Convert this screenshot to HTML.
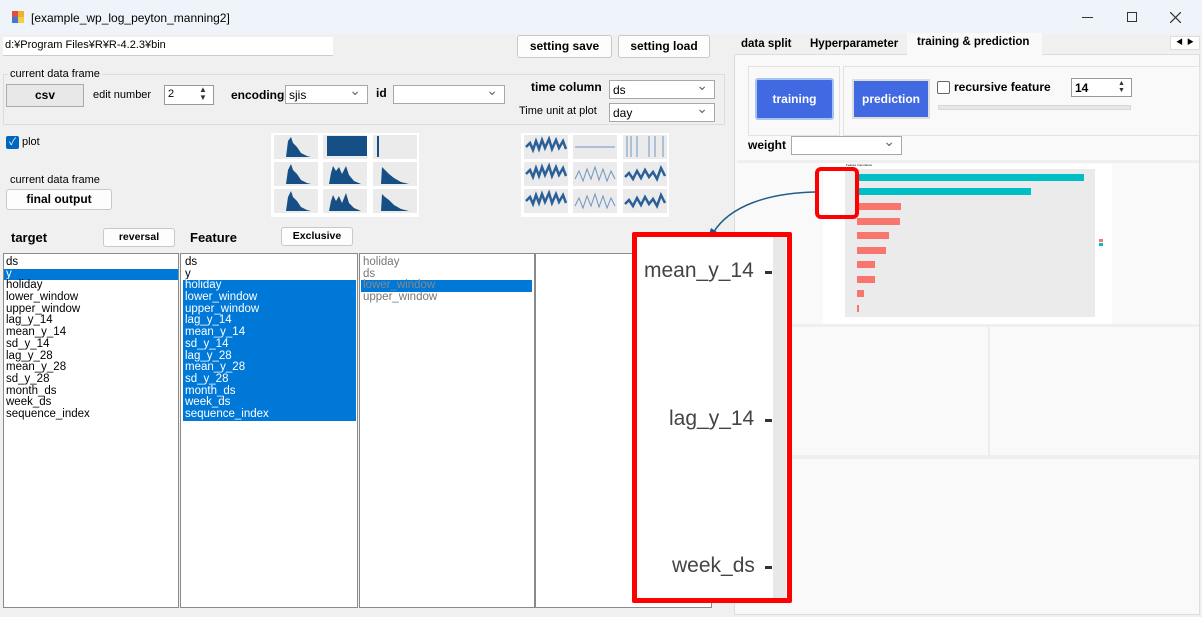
<!DOCTYPE html>
<html><head><meta charset="utf-8"><style>
*{box-sizing:border-box;margin:0;padding:0}
body{width:1202px;height:617px;overflow:hidden;background:#f0f0f0;font-family:"Liberation Sans","Noto Sans CJK JP",sans-serif;font-size:12px;color:#000;position:relative}
.a{position:absolute;white-space:nowrap}
.btn{position:absolute;background:#fdfdfd;border:1px solid #c8c8c8;border-radius:3px;font-weight:bold;text-align:center;font-size:12px;white-space:nowrap}
.cb{position:absolute;background:#fff;border:1px solid #a8a8a8;font-size:12px;padding:2px 3px}
.cb:after{content:"⌄";position:absolute;right:6px;top:-4px;color:#666;font-size:14px}
.list{position:absolute;background:#fff;border:1px solid #8a8a8a;font-size:11.5px;line-height:11.7px;padding-top:1px}
.list div{padding-left:2px;height:11.7px;white-space:nowrap}
.sel{background:#0078d7;color:#fff}
</style></head><body>
<div class="a" style="left:0;top:0;width:1202px;height:34px;background:#eef4f9"></div>
<div class="a" style="left:12px;top:11px;width:6px;height:6px;background:#e0503c"></div>
<div class="a" style="left:18px;top:11px;width:6px;height:6px;background:#f0b030"></div>
<div class="a" style="left:12px;top:17px;width:6px;height:6px;background:#3c78d8"></div>
<div class="a" style="left:18px;top:17px;width:6px;height:6px;background:#f0d040"></div>
<div class="a" style="left:31px;top:11px;font-size:12px">[example_wp_log_peyton_manning2]</div>
<div class="a" style="left:1082px;top:17px;width:11px;height:1px;background:#333"></div>
<div class="a" style="left:1127px;top:12px;width:10px;height:10px;border:1px solid #333"></div>
<svg class="a" style="left:1170px;top:12px" width="11" height="11"><path d="M0 0L11 11M11 0L0 11" stroke="#333" stroke-width="1.2"/></svg>

<div class="a" style="left:3px;top:37px;width:330px;height:19px;background:#fff;border-bottom:1px solid #ccc;padding:2px 2px;font-size:11px">d:¥Program Files¥R¥R-4.2.3¥bin</div>
<div class="btn" style="left:517px;top:35px;width:95px;height:23px;line-height:21px">setting save</div>
<div class="btn" style="left:618px;top:35px;width:92px;height:23px;line-height:21px">setting load</div>

<div class="a" style="left:3px;top:74px;width:722px;height:51px;border:1px solid #dcdcdc"></div>
<div class="a" style="left:8px;top:68px;background:#f0f0f0;padding:0 2px;font-size:11px">current data frame</div>
<div class="btn" style="left:6px;top:84px;width:78px;height:23px;line-height:21px;background:#e8e8e8;border-color:#aaa;border-radius:0">csv</div>
<div class="a" style="left:93px;top:89px;font-size:11px">edit number</div>
<div class="a" style="left:164px;top:85px;width:50px;height:20px;background:#fff;border:1px solid #999;padding:2px 3px;font-size:11px">2</div>
<div class="a" style="left:199px;top:86px;font-size:8px;line-height:8px;color:#333">▲<br>▼</div>
<div class="a" style="left:231px;top:88px;font-weight:bold">encoding</div>
<div class="cb" style="left:285px;top:85px;width:83px;height:19px">sjis</div>
<div class="a" style="left:376px;top:86px;font-weight:bold">id</div>
<div class="cb" style="left:393px;top:85px;width:112px;height:19px"></div>
<div class="a" style="left:531px;top:80px;font-weight:bold">time column</div>
<div class="cb" style="left:609px;top:80px;width:106px;height:19px">ds</div>
<div class="a" style="left:519px;top:105px;font-size:11px">Time unit at plot</div>
<div class="cb" style="left:609px;top:103px;width:106px;height:19px">day</div>

<div class="a" style="left:6px;top:136px;width:13px;height:13px;background:#0067c0;border-radius:2px;color:#fff;font-size:10px;line-height:13px;text-align:center">✓</div>
<div class="a" style="left:22px;top:136px;font-size:11px">plot</div>
<div class="a" style="left:10px;top:174px;font-size:11px">current data frame</div>
<div class="btn" style="left:6px;top:189px;width:106px;height:21px;line-height:19px">final output</div>

<svg class="a" style="left:271px;top:133px" width="148" height="84">
<rect width="148" height="84" fill="#fff"/>
<g fill="#ebebeb"><rect x="3" y="2" width="44" height="24"/><rect x="52" y="2" width="44" height="24"/><rect x="102" y="2" width="44" height="24"/>
<rect x="3" y="29" width="44" height="24"/><rect x="52" y="29" width="44" height="24"/><rect x="102" y="29" width="44" height="24"/>
<rect x="3" y="56" width="44" height="24"/><rect x="52" y="56" width="44" height="24"/><rect x="102" y="56" width="44" height="24"/></g>
<g fill="#164f86">
<path d="M15 24 L17 8 L20 4 L22 10 L26 14 L30 20 L36 23 L40 24Z"/>
<rect x="56" y="3" width="40" height="20"/>
<rect x="106" y="3" width="2" height="21"/>
<path d="M15 51 L17 37 L20 31 L22 37 L26 41 L30 47 L36 50 L40 51Z"/>
<path d="M58 51 L60 40 L62 33 L65 38 L68 34 L71 41 L75 33 L78 42 L83 48 L90 51Z"/>
<path d="M110 51 L111 34 L114 37 L118 41 L123 45 L130 49 L138 51Z"/>
<path d="M15 78 L17 64 L20 58 L22 64 L26 68 L30 74 L36 77 L40 78Z"/>
<path d="M58 78 L60 68 L62 62 L65 68 L68 63 L71 70 L75 60 L78 70 L83 75 L90 78Z"/>
<path d="M110 78 L111 61 L114 64 L118 67 L123 72 L130 76 L138 78Z"/>
</g></svg>
<svg class="a" style="left:521px;top:133px" width="148" height="84">
<rect width="148" height="84" fill="#fff"/>
<g fill="#ebebeb"><rect x="3" y="2" width="44" height="24"/><rect x="52" y="2" width="44" height="24"/><rect x="102" y="2" width="44" height="24"/>
<rect x="3" y="29" width="44" height="24"/><rect x="52" y="29" width="44" height="24"/><rect x="102" y="29" width="44" height="24"/>
<rect x="3" y="56" width="44" height="24"/><rect x="52" y="56" width="44" height="24"/><rect x="102" y="56" width="44" height="24"/></g>
<g fill="none" stroke="#2a5f98" stroke-width="2.5">
<path d="M5 14 L9 10 L12 17 L15 8 L18 16 L21 7 L24 15 L28 6 L31 16 L35 7 L38 15 L42 8 L45 16"/>
<path d="M5 41 L9 37 L12 44 L15 35 L18 43 L21 34 L24 42 L28 33 L31 43 L35 34 L38 42 L42 35 L45 43"/>
<path d="M5 68 L9 64 L12 71 L15 62 L18 70 L21 61 L24 69 L28 60 L31 70 L35 61 L38 69 L42 62 L45 70"/>
<path d="M104 44 L108 40 L112 46 L116 38 L120 45 L124 37 L128 44 L132 39 L136 46 L140 35 L144 43"/>
<path d="M104 71 L108 67 L112 73 L116 65 L120 72 L124 64 L128 71 L132 66 L136 73 L140 62 L144 70"/>
</g>
<g fill="none" stroke="#6f95bf" stroke-width="1">
<path d="M54 14 L94 14"/>
<path d="M54 46 L58 38 L62 48 L66 36 L70 46 L74 34 L78 47 L82 36 L86 48 L90 38 L94 46"/>
<path d="M54 73 L58 65 L62 75 L66 63 L70 73 L74 61 L78 74 L82 63 L86 75 L90 65 L94 73"/>
<path d="M106 3V24M110 3V24M116 3V24M128 3V24M134 3V24M142 3V24"/>
</g></svg>

<div class="a" style="left:11px;top:230px;font-weight:bold;font-size:13px">target</div>
<div class="btn" style="left:103px;top:228px;width:72px;height:19px;line-height:17px;font-size:10.5px">reversal</div>
<div class="a" style="left:190px;top:230px;font-weight:bold;font-size:13px">Feature</div>
<div class="btn" style="left:281px;top:227px;width:72px;height:19px;line-height:16px;font-size:10.5px">Exclusive</div>

<div class="list" style="left:3px;top:253px;width:176px;height:355px;padding-top:3px">
<div>ds</div><div class="sel">y</div><div>holiday</div><div>lower_window</div><div>upper_window</div><div>lag_y_14</div><div>mean_y_14</div><div>sd_y_14</div><div>lag_y_28</div><div>mean_y_28</div><div>sd_y_28</div><div>month_ds</div><div>week_ds</div><div>sequence_index</div></div>
<div class="list" style="left:180px;top:253px;width:178px;height:355px;padding-left:2px;padding-top:3px">
<div>ds</div><div>y</div><div class="sel" style="width:173px">holiday</div><div class="sel" style="width:173px">lower_window</div><div class="sel" style="width:173px">upper_window</div><div class="sel" style="width:173px">lag_y_14</div><div class="sel" style="width:173px">mean_y_14</div><div class="sel" style="width:173px">sd_y_14</div><div class="sel" style="width:173px">lag_y_28</div><div class="sel" style="width:173px">mean_y_28</div><div class="sel" style="width:173px">sd_y_28</div><div class="sel" style="width:173px">month_ds</div><div class="sel" style="width:173px">week_ds</div><div class="sel" style="width:173px">sequence_index</div></div>
<div class="list" style="left:359px;top:253px;width:176px;height:355px;color:#777;padding-left:1px;padding-top:3px">
<div>holiday</div><div>ds</div><div class="sel" style="color:#888;width:171px">lower_window</div><div>upper_window</div></div>
<div class="list" style="left:535px;top:253px;width:177px;height:355px"></div>

<div class="a" style="left:734px;top:54px;width:466px;height:561px;background:#f9f9f9;border:1px solid #ddd"></div>
<div class="a" style="left:736px;top:36px;font-weight:bold;font-size:11.5px;padding:2px 5px">data split</div>
<div class="a" style="left:805px;top:36px;font-weight:bold;font-size:11.5px;padding:2px 5px">Hyperparameter</div>
<div class="a" style="left:907px;top:33px;width:135px;height:22px;background:#f9f9f9;font-weight:bold;font-size:11.5px;padding:3px 10px">training &amp; prediction</div>
<div class="a" style="left:1170px;top:36px;width:30px;height:14px;background:#fff;border:1px solid #ddd;font-size:7px;line-height:12px;text-align:center">◀ &nbsp;▶</div>
<div class="a" style="left:748px;top:66px;width:92px;height:70px;border:1px solid #e2e2e2"></div>
<div class="a" style="left:843px;top:66px;width:357px;height:70px;border:1px solid #e2e2e2"></div>
<div class="a" style="left:755px;top:78px;width:79px;height:42px;background:#4169e1;border:2px solid #a8c4f0;border-radius:3px;color:#fff;font-weight:bold;font-size:12px;text-align:center;line-height:38px">training</div>
<div class="a" style="left:852px;top:79px;width:78px;height:40px;background:#4169e1;border:2px solid #ddd;color:#fff;font-weight:bold;font-size:12px;text-align:center;line-height:37px">prediction</div>
<div class="a" style="left:937px;top:81px;width:13px;height:13px;border:1px solid #666;border-radius:2px;background:#fff"></div>
<div class="a" style="left:954px;top:80px;font-weight:bold;font-size:12px">recursive feature</div>
<div class="a" style="left:1071px;top:78px;width:61px;height:19px;background:#fff;border:1px solid #999;padding:2px 3px;font-weight:bold">14</div>
<div class="a" style="left:1118px;top:80px;font-size:7px;line-height:7px;color:#333">▲<br>▼</div>
<div class="a" style="left:938px;top:105px;width:193px;height:5px;background:#e6e6e6;border:1px solid #d8d8d8"></div>
<div class="a" style="left:748px;top:138px;font-weight:bold">weight</div>
<div class="cb" style="left:791px;top:136px;width:111px;height:19px"></div>
<div class="a" style="left:737px;top:160px;width:462px;height:3px;background:#efefef"></div>

<div class="a" style="left:823px;top:164px;width:289px;height:160px;background:#fff"></div>
<div class="a" style="left:845px;top:169px;width:250px;height:148px;background:#ebebeb"></div>
<div class="a" style="left:846px;top:163px;font-size:3px">Feature Importance</div>
<div class="a" style="left:857px;top:174px;width:227px;height:7px;background:#00bfc4"></div>
<div class="a" style="left:857px;top:188px;width:174px;height:7px;background:#00bfc4"></div>
<div class="a" style="left:857px;top:203px;width:44px;height:7px;background:#f8766d"></div>
<div class="a" style="left:857px;top:218px;width:43px;height:7px;background:#f8766d"></div>
<div class="a" style="left:857px;top:232px;width:32px;height:7px;background:#f8766d"></div>
<div class="a" style="left:857px;top:247px;width:29px;height:7px;background:#f8766d"></div>
<div class="a" style="left:857px;top:261px;width:18px;height:7px;background:#f8766d"></div>
<div class="a" style="left:857px;top:276px;width:18px;height:7px;background:#f8766d"></div>
<div class="a" style="left:857px;top:290px;width:7px;height:7px;background:#f8766d"></div>
<div class="a" style="left:857px;top:305px;width:2px;height:7px;background:#f8766d"></div>
<div class="a" style="left:1099px;top:239px;width:4px;height:3px;background:#f8766d"></div>
<div class="a" style="left:1099px;top:243px;width:4px;height:3px;background:#00bfc4"></div>

<div class="a" style="left:737px;top:324px;width:462px;height:3px;background:#efefef"></div>
<div class="a" style="left:988px;top:327px;width:2px;height:128px;background:#ececec"></div>
<div class="a" style="left:737px;top:455px;width:462px;height:4px;background:#efefef"></div>

<div class="a" style="left:815px;top:167px;width:44px;height:52px;border:4px solid #f00;border-radius:6px"></div>
<svg class="a" style="left:700px;top:185px" width="120" height="60"><path d="M115 7 C70 8 30 20 13 48" fill="none" stroke="#1f5f86" stroke-width="1.5"/><path d="M8 52 L11 43 L17 47Z" fill="#1f5f86"/></svg>
<div class="a" style="left:632px;top:232px;width:160px;height:371px;border:5px solid #f00;border-radius:2px;background:#fff"></div>
<div class="a" style="left:773px;top:237px;width:13px;height:361px;background:#e8e8e8"></div>
<div class="a" style="left:644px;top:259px;font-size:21px;color:#444">mean_y_14</div>
<div class="a" style="left:669px;top:407px;font-size:21px;color:#444">lag_y_14</div>
<div class="a" style="left:672px;top:554px;font-size:21px;color:#444">week_ds</div>
<div class="a" style="left:765px;top:271px;width:7px;height:3px;background:#333"></div>
<div class="a" style="left:765px;top:419px;width:7px;height:3px;background:#333"></div>
<div class="a" style="left:765px;top:566px;width:7px;height:3px;background:#333"></div>
</body></html>
